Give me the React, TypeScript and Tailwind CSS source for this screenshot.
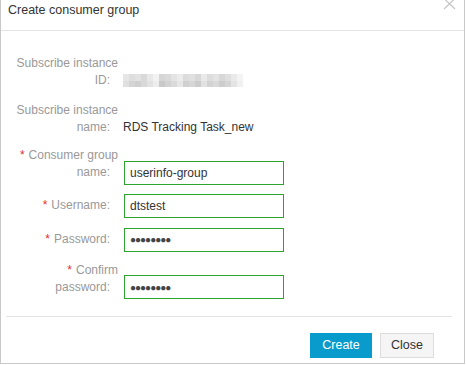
import React from "react";

const blurTop = ["#e6e6e6","#dedede","#e2e2e2","#d9d9d9","#e8e8e8","#f2f2f2","#d6d6d6","#dadada","#e4e4e4","#ececec","#dcdcdc","#e0e0e0","#d8d8d8","#e9e9e9","#dddddd","#e3e3e3","#d7d7d7","#dfdfdf","#eaeaea","#f4f4f4"];
const blurBottom = ["#e0e0e0","#d4d4d4","#cfcfcf","#d8d8d8","#e2e2e2","#ededed","#c9c9c9","#d2d2d2","#dadada","#e6e6e6","#d0d0d0","#d6d6d6","#cccccc","#e1e1e1","#d3d3d3","#d9d9d9","#cdcdcd","#d5d5d5","#e4e4e4","#f0f0f0"];

function Label({ lines, required }: { lines: string[]; required?: boolean }) {
  return (
    <div className="w-[117px] shrink-0 text-right text-[12px] leading-[17px] text-[#999]">
      {lines.map((l, i) => (
        <div key={i}>
          {i === 0 && required && <span className="mr-[4px] text-[#e62e2e]">*</span>}
          {l}
          {i === lines.length - 1 && (
            <>
              :<span className="inline-block w-[8px]" />
            </>
          )}
        </div>
      ))}
    </div>
  );
}

function Field({ value, password }: { value: string; password?: boolean }) {
  return (
    <div className="ml-[6px] flex h-[24px] w-[160px] items-center border border-[#2ea32e] px-[5px] text-[12px] text-[#333]">
      {password ? (
        <span className="text-[10px] tracking-[-1px] text-[#444]">{"●".repeat(value.length)}</span>
      ) : (
        value
      )}
    </div>
  );
}

export default function App() {
  return (
    <div className="h-[365px] w-[466px] bg-white" style={{ fontFamily: '"Liberation Sans", Arial, sans-serif' }}>
      <div className="relative h-[364px] w-[465px] border-x border-b border-[#c8c8c8] bg-white">
        <div className="h-[31px] border-b border-[#e3e3e3] px-[7px] pt-[2px] text-[12.5px] leading-[16px] text-[#333]">
          Create consumer group
        </div>
        <svg className="absolute left-[442px] top-[-2px]" width="13" height="12" viewBox="0 0 13 12">
          <path d="M1 0.5 L12 11 M12 0.5 L1 11" stroke="#c4c4c4" strokeWidth="1.2" fill="none" />
        </svg>

        <div className="pt-[24px]">
          <div className="flex items-end">
            <Label lines={["Subscribe instance", "ID"]} />
            <div className="mb-[2px] ml-[5px] flex flex-col">
              <div className="flex">
                {blurTop.map((c, i) => (
                  <div key={i} className="h-[7px] w-[6px]" style={{ backgroundColor: c }} />
                ))}
              </div>
              <div className="flex">
                {blurBottom.map((c, i) => (
                  <div key={i} className="h-[6px] w-[6px]" style={{ backgroundColor: c }} />
                ))}
              </div>
            </div>
          </div>

          <div className="mt-[13px] flex items-end">
            <Label lines={["Subscribe instance", "name"]} />
            <div className="ml-[5px] text-[12px] leading-[17px] text-[#333]">RDS Tracking Task_new</div>
          </div>

          <div className="mt-[11px] flex items-end">
            <div className="pb-[3.5px]">
              <Label lines={["Consumer group", "name"]} required />
            </div>
            <Field value="userinfo-group" />
          </div>

          <div className="mt-[9px] flex items-center">
            <Label lines={["Username"]} required />
            <Field value="dtstest" />
          </div>

          <div className="mt-[10px] flex items-center">
            <Label lines={["Password"]} required />
            <Field value="12345678" password />
          </div>

          <div className="mt-[10px] flex items-end">
            <div className="pb-[3.5px]">
              <Label lines={["Confirm", "password"]} required />
            </div>
            <Field value="12345678" password />
          </div>
        </div>

        <div className="ml-[5px] mt-[17px] w-[446px] border-t border-[#e3e3e3]" />

        <div className="mt-[16px] flex justify-end gap-[8px] pr-[30px]">
          <button className="h-[25px] w-[62px] bg-[#0a9bcd] text-[12.5px] text-white">Create</button>
          <button className="h-[25px] w-[54px] border border-[#dddddd] bg-[#f5f5f5] text-[12.5px] text-[#333]">
            Close
          </button>
        </div>
      </div>
    </div>
  );
}
